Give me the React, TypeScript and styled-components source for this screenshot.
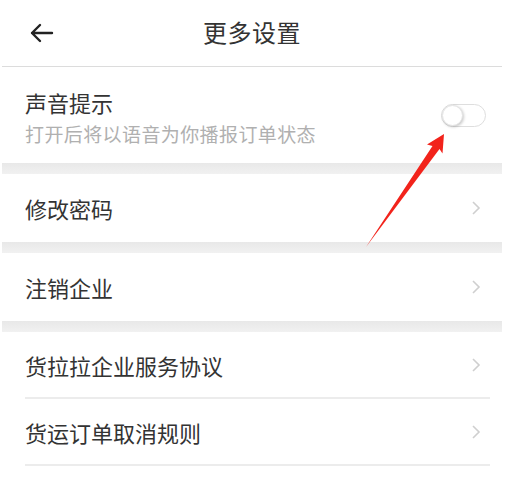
import React from 'react';
import styled, { createGlobalStyle } from 'styled-components';

const GlobalStyle = createGlobalStyle`
    html, body {
        margin: 0;
        padding: 0;
        background: #ffffff;
    }

    body {
        font-family: 'Noto Sans CJK SC', 'Noto Sans', sans-serif;
        color: #333333;
    }
`;

const Page = styled.div`
    position: relative;
    width: 500px;
    margin-left: 2px;
    background: #ffffff;
`;

const Header = styled.header`
    position: relative;
    display: flex;
    align-items: center;
    justify-content: center;

    height: 66px;
    border-bottom: 1px solid #dcdcdc;
`;

const BackButton = styled.button`
    position: absolute;
    top: 22px;
    left: 26px;

    display: flex;
    padding: 0;
    border: none;
    background: none;
`;

const Title = styled.h1`
    margin: 0 0 3px;
    font-size: 24px;
    font-weight: 400;
    color: #333333;
    letter-spacing: 0.5px;
`;

const Gap = styled.div`
    height: 11px;
    background: linear-gradient(#e8e8e8, #f1f1f1);
`;

const Row = styled.div<{ $height: number; $divider?: boolean }>`
    display: flex;
    align-items: center;
    justify-content: space-between;

    height: ${(p) => p.$height}px;
    margin: 0 12px 0 23px;
    border-bottom: ${(p) => (p.$divider ? '2px solid #ececec' : 'none')};
`;

const Texts = styled.div`
    display: flex;
    flex-direction: column;
    margin-top: 4px;
`;

const Label = styled.span`
    font-size: 22px;
    line-height: 30px;
    color: #333333;
`;

const Hint = styled.span`
    margin-top: 4px;
    font-size: 19px;
    line-height: 26px;
    letter-spacing: 0.4px;
    color: #b0b0b0;
`;

const Toggle = styled.span`
    position: relative;
    box-sizing: border-box;
    width: 45px;
    height: 23px;
    margin-right: 4px;
    margin-top: 1px;
    border: 1.5px solid #dedede;
    border-radius: 12px;
    background: #ffffff;

    &::after {
        content: '';
        position: absolute;
        top: -0.5px;
        left: 0;
        box-sizing: border-box;
        width: 21px;
        height: 21px;
        border-radius: 50%;
        background: #ffffff;
        border: 1px solid #e4e4e4;
        box-shadow: 1px 1px 3px rgba(0, 0, 0, 0.22);
    }
`;

const ChevronIcon = styled.svg`
    margin-right: 8px;
`;

const Pointer = styled.svg`
    position: absolute;
    top: 0;
    left: 0;
    pointer-events: none;
`;

const Chevron = () => (
    <ChevronIcon width="12" height="16" viewBox="0 0 12 16">
        <path d="M3 2 L9 8 L3 14" fill="none" stroke="#cfcfcf" strokeWidth="1.6" />
    </ChevronIcon>
);

const BackIcon = () => (
    <svg width="26" height="22" viewBox="0 0 26 22">
        <path
            d="M24 11 H4 M12 3 L4 11 L12 19"
            fill="none"
            stroke="#222222"
            strokeWidth="2.4"
            strokeLinecap="round"
            strokeLinejoin="round"
        />
    </svg>
);

const links = [
    { label: '修改密码', gapAfter: true },
    { label: '注销企业', gapAfter: true },
];

const terms = ['货拉拉企业服务协议', '货运订单取消规则'];

export default function App() {
    return (
        <>
            <GlobalStyle />
            <Page>
                <Header>
                    <BackButton aria-label="返回">
                        <BackIcon />
                    </BackButton>
                    <Title>更多设置</Title>
                </Header>

                <Row $height={96}>
                    <Texts>
                        <Label>声音提示</Label>
                        <Hint>打开后将以语音为你播报订单状态</Hint>
                    </Texts>
                    <Toggle />
                </Row>
                <Gap />

                {links.map((item) => (
                    <React.Fragment key={item.label}>
                        <Row $height={68}>
                            <Label>{item.label}</Label>
                            <Chevron />
                        </Row>
                        {item.gapAfter && <Gap />}
                    </React.Fragment>
                ))}

                {terms.map((label) => (
                    <Row key={label} $height={65} $divider>
                        <Label>{label}</Label>
                        <Chevron />
                    </Row>
                ))}

                <Pointer width="500" height="487" viewBox="0 0 500 487">
                    {/* red marker pointing at the switch */}
                    <path
                        d="M364 247 L430.5 146 L425 144.5 L442 134 L440.5 153.5 L437.5 149 Z"
                        fill="#f2231b"
                    />
                </Pointer>
            </Page>
        </>
    );
}
